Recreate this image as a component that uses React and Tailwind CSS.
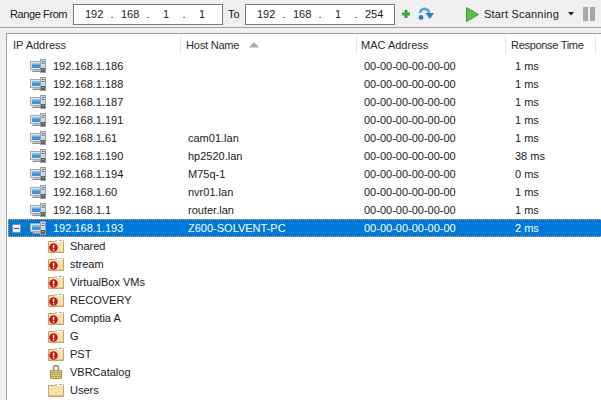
import React from 'react';

const ROWS = [
  { ip: '192.168.1.186', host: '', time: '1 ms' },
  { ip: '192.168.1.188', host: '', time: '1 ms' },
  { ip: '192.168.1.187', host: '', time: '1 ms' },
  { ip: '192.168.1.191', host: '', time: '1 ms' },
  { ip: '192.168.1.61', host: 'cam01.lan', time: '1 ms' },
  { ip: '192.168.1.190', host: 'hp2520.lan', time: '38 ms' },
  { ip: '192.168.1.194', host: 'M75q-1', time: '0 ms' },
  { ip: '192.168.1.60', host: 'nvr01.lan', time: '1 ms' },
  { ip: '192.168.1.1', host: 'router.lan', time: '1 ms' },
];

const SHARES = [
  { name: 'Shared', icon: 'denied' },
  { name: 'stream', icon: 'denied' },
  { name: 'VirtualBox VMs', icon: 'denied' },
  { name: 'RECOVERY', icon: 'denied' },
  { name: 'Comptia A', icon: 'denied' },
  { name: 'G', icon: 'denied' },
  { name: 'PST', icon: 'denied' },
  { name: 'VBRCatalog', icon: 'lock' },
  { name: 'Users', icon: 'folder' },
];

const COLS = 'grid grid-cols-[174px_176px_149px_90px_1fr]';

function ComputerIcon() {
  return (
    <svg width="16" height="14" viewBox="0 0 16 14" className="shrink-0">
      <rect x="0.5" y="2.5" width="11" height="8" fill="#dfe3e6" stroke="#a3aab0" />
      <rect x="2" y="4" width="8" height="5" fill="#3a96e0" />
      <rect x="2" y="4" width="8" height="1.5" fill="#8cc6ef" />
      <rect x="3" y="11" width="7" height="1" fill="#b8bec3" />
      <rect x="2" y="12" width="9" height="1" fill="#8f969c" />
      <rect x="10.5" y="0.5" width="5" height="13" fill="#d3d7da" stroke="#979ea4" />
      <rect x="12" y="2" width="2.5" height="1" fill="#6d7379" />
      <rect x="12" y="4" width="2.5" height="1" fill="#6d7379" />
      <rect x="11" y="9" width="4" height="4" fill="#5b6167" />
      <rect x="12" y="10" width="2" height="1" fill="#4fc060" />
    </svg>
  );
}

function ShareIcon({ type }) {
  if (type === 'lock') {
    return (
      <svg width="16" height="16" viewBox="0 0 16 16" className="shrink-0">
        <path d="M5.5 7V4a2.5 2.5 0 0 1 5 0v3" fill="none" stroke="#9c8a62" strokeWidth="1.6" />
        <rect x="2.5" y="6.5" width="11" height="8" fill="#e2c67c" stroke="#b09755" />
        <path d="M3 8.5h10M3 10.5h10M3 12.5h10" stroke="#bd9f58" />
      </svg>
    );
  }
  return (
    <svg width="16" height="16" viewBox="0 0 16 16" className="shrink-0">
      <path d="M0.5 14.5V3.5h6l1-1h8v12z" fill="#f6e2ab" stroke="#c9a45c" />
      <rect x="9" y="2" width="6" height="2" fill="#ffffff" />
      <rect x="11" y="2" width="3" height="1" fill="#6cc0ea" />
      <rect x="1" y="13" width="14" height="1" fill="#e4c581" />
      {type === 'denied' && (
        <>
          <circle cx="5.5" cy="9.5" r="4.3" fill="#c8141c" />
          <rect x="4.8" y="6.8" width="1.5" height="3.4" fill="#ffffff" />
          <rect x="4.8" y="11" width="1.5" height="1.4" fill="#ffffff" />
        </>
      )}
    </svg>
  );
}

function IpField({ parts }) {
  return (
    <div className="flex items-center h-[21px] w-[150px] shrink-0 bg-white border border-[#7a7a7a] pl-[11px]">
      {parts.map((p, i) => (
        <React.Fragment key={i}>
          {i > 0 && <span className="w-[18px] text-center">.</span>}
          <span className="w-[18px] text-center">{p}</span>
        </React.Fragment>
      ))}
    </div>
  );
}

function HeaderCell({ children, pad, sorted }) {
  return (
    <div className={`flex items-center h-[18px] border-r border-[#e5e5e5] ${pad}`}>
      <span>{children}</span>
      {sorted && (
        <svg width="10" height="6" viewBox="0 0 10 6" className="ml-[10px]">
          <path d="M5 0l5 5.5H0z" fill="#a9a9a9" />
        </svg>
      )}
    </div>
  );
}

export default function App() {
  return (
    <div className="w-[601px] h-[400px] overflow-hidden bg-[#f0f0f0] text-[11px] leading-none text-[#1a1a1a] font-['Liberation_Sans',Arial,sans-serif]">
      {/* toolbar */}
      <div className="flex items-center h-[28px] pl-[10px] pt-[1px] border-b border-[#a0a0a0] whitespace-nowrap">
        <span className="w-[63px] shrink-0 tracking-[-0.4px]">Range From</span>
        <IpField parts={['192', '168', '1', '1']} />
        <span className="ml-[5px] w-[17px] shrink-0">To</span>
        <IpField parts={['192', '168', '1', '254']} />
        <svg width="8" height="8" viewBox="0 0 8 8" className="ml-[7px] shrink-0">
          <path d="M2.5 0h3v2.5H8v3H5.5V8h-3V5.5H0v-3h2.5z" fill="#35a83c" />
        </svg>
        <svg width="16" height="14" viewBox="0 0 16 14" className="ml-[8px] shrink-0">
          <path d="M2 6C3 1 9 0 11.5 6" fill="none" stroke="#5aa5e0" strokeWidth="2.6" />
          <path d="M7.5 6H16l-4.2 6z" fill="#2f7fc8" />
          <circle cx="3" cy="10.5" r="2.4" fill="#2f7fc8" />
        </svg>
        <svg width="13" height="15" viewBox="0 0 13 15" className="ml-[32px] shrink-0">
          <path d="M0.5 0.5L12.5 7.5 0.5 14.5z" fill="#5cc04a" stroke="#3c9a35" />
        </svg>
        <span className="ml-[5px] w-[84px] shrink-0 tracking-[0.2px]">Start Scanning</span>
        <svg width="6" height="4" viewBox="0 0 6 4" className="shrink-0">
          <path d="M0 0h6L3 3.5z" fill="#222222" />
        </svg>
        <div className="ml-[9px] flex gap-[2px] shrink-0">
          <div className="w-[5px] h-[14px] bg-[#a8a8a8]" />
          <div className="w-[5px] h-[14px] bg-[#a8a8a8]" />
        </div>
      </div>

      {/* results list */}
      <div className="mt-[5px] ml-[6px] h-[367px] bg-white border-l border-t border-[#a0a0a0]">
        <div className={`${COLS} pt-[2px] text-[#2b2b2b]`}>
          <HeaderCell pad="pl-[6px]">IP Address</HeaderCell>
          <HeaderCell pad="pl-[5px] tracking-[-0.2px]" sorted>Host Name</HeaderCell>
          <HeaderCell pad="pl-[4px]">MAC Address</HeaderCell>
          <HeaderCell pad="pl-[5px] tracking-[-0.3px]">Response Time</HeaderCell>
        </div>

        <div className="mt-[3px]">
          {ROWS.map((r) => (
            <div key={r.ip} className={`${COLS} h-[18px] items-center`}>
              <div className="flex items-center pl-[23px] gap-[7px]">
                <ComputerIcon />
                <span>{r.ip}</span>
              </div>
              <div className="pl-[7px]">{r.host}</div>
              <div className="pl-[7px]">00-00-00-00-00-00</div>
              <div className="pl-[9px]">{r.time}</div>
            </div>
          ))}

          {/* selected row: dotted focus edge runs off the right of the window */}
          <div className="grid grid-cols-[172px_176px_149px_90px_1fr] h-[18px] items-center ml-[1px] bg-[#0078d7] text-white border-y border-l border-dotted border-[#e8a050]">
            <div className="flex items-center pl-[3px]">
              <div className="flex items-center justify-center w-[9px] h-[9px] bg-[#f0f2f5] border border-[#7f8fa8]">
                <div className="w-[5px] h-[1px] bg-[#24408a]" />
              </div>
              <div className="ml-[9px] flex items-center gap-[7px]">
                <ComputerIcon />
                <span>192.168.1.193</span>
              </div>
            </div>
            <div className="pl-[7px]">Z600-SOLVENT-PC</div>
            <div className="pl-[7px]">00-00-00-00-00-00</div>
            <div className="pl-[9px]">2 ms</div>
          </div>

          {SHARES.map((s) => (
            <div key={s.name} className="flex items-center h-[18px] pl-[41px] gap-[6px]">
              <ShareIcon type={s.icon} />
              <span>{s.name}</span>
            </div>
          ))}
        </div>
      </div>
    </div>
  );
}
